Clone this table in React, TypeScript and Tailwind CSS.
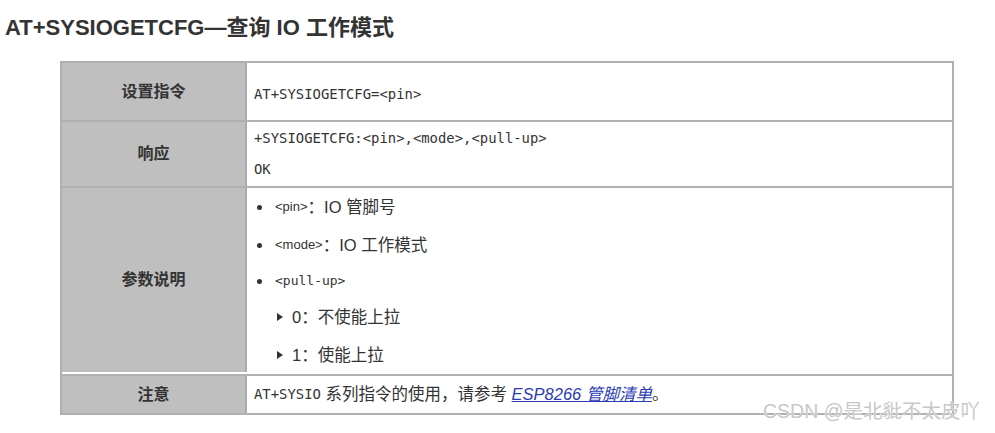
const sans = "font-['Liberation_Sans','Noto_Sans_CJK_SC',sans-serif]";
const mono = "font-['DejaVu_Sans_Mono','Noto_Sans_CJK_SC',monospace]";

function Label({ text, h }: { text: string; h: string }) {
  return (
    <div
      className={`${h} flex items-center justify-center bg-[#bfbfbf] border-r-2 border-[#ababab] text-[16px] font-bold text-[#333] ${sans}`}
    >
      {text}
    </div>
  );
}

function Bullet({ children }: { children: React.ReactNode }) {
  return (
    <div className="flex items-center h-[38px]">
      <span className="w-[5px] h-[5px] rounded-full bg-[#333] ml-[3px] mr-[13px]" />
      {children}
    </div>
  );
}

function SubItem({ children }: { children: React.ReactNode }) {
  return (
    <div className="flex items-center h-[38px] pl-[23px]">
      <svg width="6" height="8" viewBox="0 0 6 8" className="mr-[9px]">
        <path d="M0 0 L6 4 L0 8 Z" fill="#333" />
      </svg>
      {children}
    </div>
  );
}

export default function App() {
  return (
    <div className="relative w-[995px] h-[433px] bg-white text-[#333] overflow-hidden">
      <h1
        className={`absolute left-[5px] top-[13px] text-[22px] leading-[30px] font-bold text-[#333] ${sans}`}
      >
        AT+SYSIOGETCFG—查询 IO 工作模式
      </h1>

      <div className="absolute left-[60px] top-[61px] w-[894px] border-2 border-[#b0b0b0]">
        <div className="grid grid-cols-[185px_1fr] border-b-2 border-[#b0b0b0]">
          <Label text="设置指令" h="h-[57px]" />
          <div className={`flex items-center pl-[7px] pt-[5px] text-[13.9px] ${mono}`}>
            AT+SYSIOGETCFG=&lt;pin&gt;
          </div>
        </div>

        <div className="grid grid-cols-[185px_1fr] border-b-2 border-[#b0b0b0]">
          <Label text="响应" h="h-[64px]" />
          <div className={`flex flex-col justify-center pl-[7px] text-[13.9px] leading-[31px] ${mono}`}>
            <div>+SYSIOGETCFG:&lt;pin&gt;,&lt;mode&gt;,&lt;pull-up&gt;</div>
            <div>OK</div>
          </div>
        </div>

        <div className="grid grid-cols-[185px_1fr] border-b-2 border-[#b0b0b0]">
          <Label text="参数说明" h="h-[184px]" />
          <div className={`flex flex-col justify-center pl-[7px] text-[16.5px] ${sans}`}>
            <Bullet>
              <span className="text-[13px]">&lt;pin&gt;</span>
              <span>：IO 管脚号</span>
            </Bullet>
            <Bullet>
              <span className="text-[13px]">&lt;mode&gt;</span>
              <span>：IO 工作模式</span>
            </Bullet>
            <div className="flex items-center h-[34px]">
              <span className="w-[5px] h-[5px] rounded-full bg-[#333] ml-[3px] mr-[13px]" />
              <span className={`text-[13px] ${mono}`}>&lt;pull-up&gt;</span>
            </div>
            <SubItem>0：不使能上拉</SubItem>
            <SubItem>1：使能上拉</SubItem>
          </div>
        </div>

        <div className="grid grid-cols-[185px_1fr]">
          <Label text="注意" h="h-[37px]" />
          <div className={`flex items-center pl-[7px] text-[16.5px] ${sans}`}>
            <span className={`text-[13.9px] ${mono}`}>AT+SYSIO</span>
            <span>&nbsp;系列指令的使用，请参考&nbsp;</span>
            <a className="italic underline text-[#2b3bb0]" href="#">
              ESP8266 管脚清单
            </a>
            <span>。</span>
          </div>
        </div>
      </div>

      <div
        className={`absolute left-[763px] top-[399px] text-[19.5px] leading-[24px] text-[#c8c8c8] ${sans} [-webkit-text-stroke:0.6px_white] [paint-order:stroke_fill]`}
      >
        CSDN @是北豼不太皮吖
      </div>
    </div>
  );
}
